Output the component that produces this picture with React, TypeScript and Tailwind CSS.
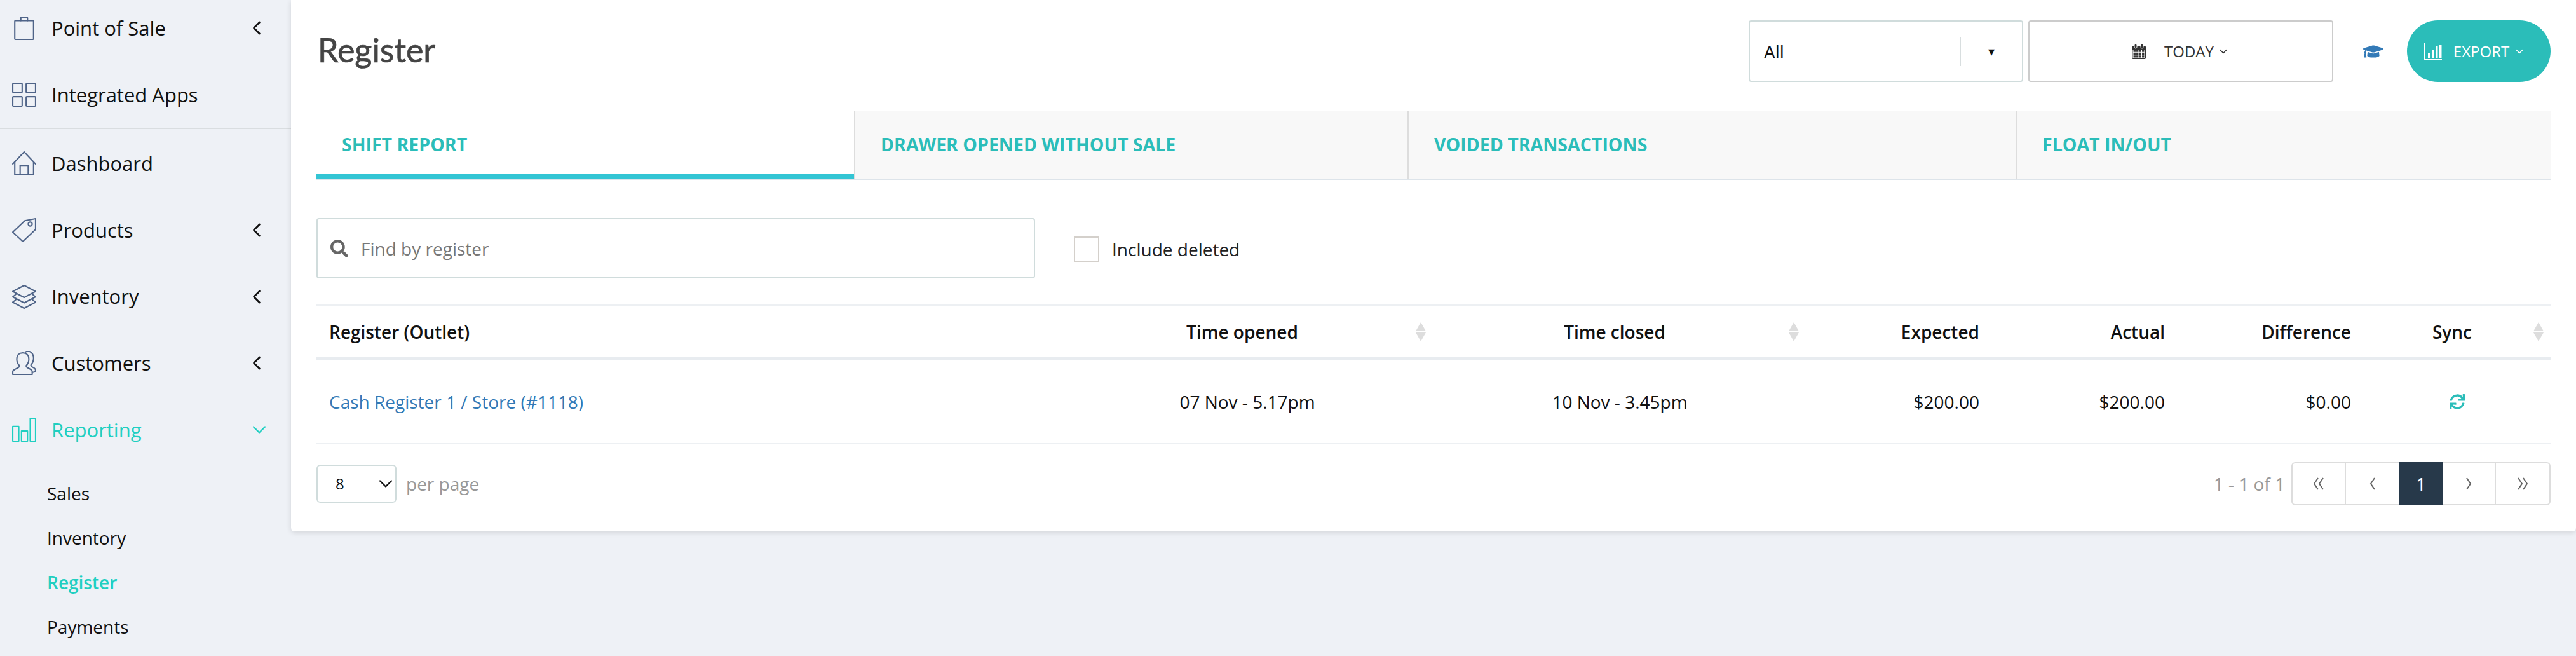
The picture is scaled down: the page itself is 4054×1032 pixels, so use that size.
import { ChevronDown, ChevronLeft } from "lucide-react";
import { FaGraduationCap, FaSearch, FaSync } from "react-icons/fa";
import type { ReactNode } from "react";

const iconProps = {
  width: 38,
  height: 38,
  viewBox: "0 0 36 36",
  fill: "none",
  stroke: "currentColor",
  strokeWidth: 2,
  strokeLinejoin: "round" as const,
  strokeLinecap: "round" as const,
};

// sidebar icons, drawn by hand to match the thin outline set
const BagIcon = () => (
  <svg {...iconProps}>
    <rect x="4" y="7" width="28" height="28" rx="1" />
    <path d="M13 7V3.5a1.5 1.5 0 0 1 1.5-1.5h7A1.5 1.5 0 0 1 23 3.5V7" />
  </svg>
);
const AppsIcon = () => (
  <svg {...iconProps}>
    <rect x="1" y="1" width="14" height="14" rx="1" />
    <rect x="21" y="1" width="14" height="14" rx="1" />
    <rect x="1" y="21" width="14" height="14" rx="1" />
    <rect x="21" y="21" width="14" height="14" rx="1" />
  </svg>
);
const HomeIcon = () => (
  <svg {...iconProps}>
    <path d="M1 19 18 1l17 18" />
    <path d="M4 16v19h28V16" />
    <path d="M12 35V21h12v14" />
  </svg>
);
const TagIcon = () => (
  <svg {...iconProps}>
    <path d="M1 21 19 4l16-3v16L16 35Z" />
    <circle cx="27" cy="9" r="3" />
  </svg>
);
const LayersIcon = () => (
  <svg {...iconProps}>
    <path d="M18 1 35 10 18 19 1 10Z" />
    <path d="M6 14 1 18l17 9 17-9-5-4" />
    <path d="M6 22 1 26l17 9 17-9-5-4" />
  </svg>
);
const UsersIcon = () => (
  <svg {...iconProps}>
    <path d="M1 35v-4c0-2 2-3 6-5 3-1 4-2 4-4-2-2-4-5-4-10C7 6 11 3 16 3s9 3 9 9c0 5-2 8-4 10 0 2 1 3 4 4 4 2 5 3 5 5v4Z" />
    <path d="M20 2c2-2 5-2 8 0s4 5 4 9-2 8-4 10c0 2 2 3 4 4s3 2 3 4c0 2-2 3-5 3" />
  </svg>
);
const BarsIcon = () => (
  <svg {...iconProps}>
    <rect x="1" y="13" width="9" height="22" />
    <rect x="14" y="20" width="9" height="15" />
    <rect x="27" y="1" width="8" height="34" />
  </svg>
);

const CalendarIcon = () => (
  <svg width="22" height="24" viewBox="0 0 22 24">
    <rect x="0" y="3" width="22" height="21" rx="2" fill="#333" />
    <rect x="4" y="0" width="4" height="7" rx="2" fill="#333" stroke="#fff" strokeWidth="1" />
    <rect x="14" y="0" width="4" height="7" rx="2" fill="#333" stroke="#fff" strokeWidth="1" />
    <path
      d="M2 9h18v13H2Z M2 13.3h18 M2 17.6h18 M6.5 9v13 M11 9v13 M15.5 9v13"
      fill="none"
      stroke="#fff"
      strokeWidth="1.1"
    />
    <path d="M1 8.5h20" stroke="#333" strokeWidth="1" />
  </svg>
);

const ChartIcon = () => (
  <svg width="28" height="28" viewBox="0 0 28 28" fill="currentColor">
    <path d="M1 1v26h27" fill="none" stroke="currentColor" strokeWidth="2" />
    <rect x="6" y="16" width="3.5" height="8" />
    <rect x="12" y="11" width="3.5" height="13" />
    <rect x="18" y="6" width="3.5" height="18" />
    <rect x="24" y="4" width="3.5" height="20" />
  </svg>
);

function NavItem({ icon, label, arrow, active }: { icon: ReactNode; label: string; arrow?: boolean; active?: boolean }) {
  return (
    <div className={`flex h-[104.6px] items-center pl-[19px] pr-[36px] ${active ? "text-[#1fcfc1]" : "text-[#111]"}`}>
      <span className={`flex w-[38px] shrink-0 ${active ? "text-[#1fcfc1]" : "text-[#4f6488]"}`}>{icon}</span>
      <span className="ml-[24px] flex-1 text-[31px]">{label}</span>
      {arrow && !active && <ChevronLeft size={36} strokeWidth={1.8} className="text-[#111]" />}
      {active && <ChevronDown size={36} strokeWidth={1.6} className="-mr-[4px]" />}
    </div>
  );
}

function SortIcon({ className }: { className: string }) {
  return (
    <span className={`absolute top-1/2 flex -translate-y-1/2 flex-col gap-[2px] ${className}`}>
      <span className="h-0 w-0 border-x-[8px] border-b-[14px] border-x-transparent border-b-[#dddddd]" />
      <span className="h-0 w-0 border-x-[8px] border-t-[14px] border-x-transparent border-t-[#dddddd]" />
    </span>
  );
}

function PagerArrow({ d, width }: { d: string; width: number }) {
  return (
    <svg width={width} height="20" viewBox={`0 0 ${width} 20`} fill="none" stroke="#666" strokeWidth="2">
      <path d={d} />
    </svg>
  );
}

const tabs = [
  { label: "SHIFT REPORT", width: "w-[846px]", active: true },
  { label: "DRAWER OPENED WITHOUT SALE", width: "w-[871px]" },
  { label: "VOIDED TRANSACTIONS", width: "w-[957px]" },
  { label: "FLOAT IN/OUT", width: "flex-1" },
];

export default function App() {
  return (
    <div className="flex h-[1032px] overflow-hidden bg-[#eef1f6] font-['Open_Sans',sans-serif]">
      {/* Sidebar */}
      <aside className="w-[458px] shrink-0 -mt-[8px]">
        <NavItem icon={<BagIcon />} label="Point of Sale" arrow />
        <NavItem icon={<AppsIcon />} label="Integrated Apps" />
        <div className="mb-[2px] h-[2px] bg-[#d9dde0]" />
        <NavItem icon={<HomeIcon />} label="Dashboard" />
        <NavItem icon={<TagIcon />} label="Products" arrow />
        <NavItem icon={<LayersIcon />} label="Inventory" arrow />
        <NavItem icon={<UsersIcon />} label="Customers" arrow />
        <NavItem icon={<BarsIcon />} label="Reporting" active />
        <ul className="pl-[74px] pt-[13px] text-[28px] text-[#111]">
          <li className="h-[70px] leading-[70px]">Sales</li>
          <li className="h-[70px] leading-[70px]">Inventory</li>
          <li className="h-[70px] leading-[70px] font-semibold text-[#1fcfc1]">Register</li>
          <li className="h-[70px] leading-[70px]">Payments</li>
        </ul>
      </aside>

      {/* Main card */}
      <main className="mr-[2px] h-[836px] flex-1 rounded-b-md bg-white px-[40px] shadow-[0_2px_8px_rgba(0,0,0,0.12)]">
        <div className="flex h-[174px] pt-[32px]">
          <h1 className="flex-1 pl-[2px] pt-[2px] font-['Lato',sans-serif] text-[52px] leading-[88px] text-[#444] [-webkit-text-stroke:0.7px_#444]">Register</h1>
          <div className="flex h-[97px] w-[432px] items-center rounded-[4px] border-2 border-[#d0dcdc] pl-[22px] text-[28px] text-[#111]">
            <span className="flex-1">All</span>
            <span className="h-[46px] w-[2px] bg-[#d8dedf]" />
            <span className="w-[96px] text-center text-[20px]">▾</span>
          </div>
          <div className="ml-[8px] flex h-[97px] w-[480px] items-center justify-center gap-[29px] rounded-[4px] border-2 border-[#cccccc] text-[24px] text-[#333]">
            <CalendarIcon />
            <span className="flex items-center gap-[5px]">
              TODAY <ChevronDown size={20} strokeWidth={1.8} />
            </span>
          </div>
          <div className="flex h-[97px] w-[116px] items-center justify-center pl-[10px] text-[#337ab7]">
            <FaGraduationCap size={32} />
          </div>
          <div className="flex h-[97px] w-[226px] items-center justify-center gap-[18px] rounded-full bg-[#2bbdb9] pr-[12px] text-[24px] text-white">
            <ChartIcon />
            <span className="flex items-center gap-[6px]">
              EXPORT <ChevronDown size={20} strokeWidth={1.8} />
            </span>
          </div>
        </div>

        {/* Tabs */}
        <div className="flex h-[109px] border-b-2 border-[#dde4ea] text-[28.5px] font-bold text-[#2bbdb9]">
          {tabs.map((tab) => (
            <div
              key={tab.label}
              className={`flex items-center pl-[40px] ${tab.width} ${
                tab.active ? "border-b-[8px] border-[#33c5d4] bg-white pt-[8px]" : "border-l-2 border-[#dddddd] bg-[#f8f8f8]"
              }`}
            >
              {tab.label}
            </div>
          ))}
        </div>

        {/* Filters */}
        <div className="flex h-[196px] items-start pt-[60px]">
          <div className="flex h-[95px] w-[1131px] items-center rounded-[4px] border-2 border-[#d0dcdc] pl-[20px]">
            <FaSearch size={28} className="text-[#666]" />
            <input placeholder="Find by register" className="ml-[20px] flex-1 text-[28px] outline-none placeholder:text-[#777]" />
          </div>
          <label className="ml-[61px] mt-[28px] flex items-center text-[28px] text-[#222]">
            <span className="h-[40px] w-[40px] border-2 border-[#d4d0cb] bg-white" />
            <span className="ml-[20px]">Include deleted</span>
          </label>
        </div>

        {/* Table */}
        <table className="w-[3516px] table-fixed border-t-2 border-[#edf0f3] text-[28px] text-[#111]">
          <colgroup>
            <col className="w-[1174px]" />
            <col className="w-[582px]" />
            <col className="w-[590px]" />
            <col className="w-[291px]" />
            <col className="w-[292px]" />
            <col className="w-[293px]" />
            <col className="w-[294px]" />
          </colgroup>
          <thead>
            <tr className="h-[84px] border-b-4 border-[#e8ecf0] font-semibold">
              <th className="px-[20px] text-left font-semibold">Register (Outlet)</th>
              <th className="relative pl-[20px] pr-[36px] text-center font-semibold">
                Time opened
                <SortIcon className="right-[10px]" />
              </th>
              <th className="relative pl-[20px] pr-[36px] text-center font-semibold">
                Time closed
                <SortIcon className="right-[13px]" />
              </th>
              <th className="px-[20px] text-right font-semibold">Expected</th>
              <th className="px-[20px] text-right font-semibold">Actual</th>
              <th className="px-[20px] text-right font-semibold">Difference</th>
              <th className="relative pl-[20px] pr-[36px] text-center font-semibold">
                Sync
                <SortIcon className="right-[11px]" />
              </th>
            </tr>
          </thead>
          <tbody>
            <tr className="h-[134px] border-b-2 border-[#edf0f3]">
              <td className="px-[20px] text-[#337ab7]">Cash Register 1 / Store (#1118)</td>
              <td className="px-[20px] text-center">07 Nov - 5.17pm</td>
              <td className="px-[20px] text-center">10 Nov - 3.45pm</td>
              <td className="px-[20px] text-right">$200.00</td>
              <td className="px-[20px] text-right">$200.00</td>
              <td className="px-[20px] text-right">$0.00</td>
              <td className="px-[20px]">
                <FaSync size={24} className="mx-auto text-[#2bbdb9]" />
              </td>
            </tr>
          </tbody>
        </table>

        {/* Footer */}
        <div className="flex items-start justify-between pt-[28px]">
          <div className="flex items-center pt-[4px]">
            <div className="flex h-[60px] w-[126px] items-center justify-between rounded-[6px] border-2 border-[#d0dcdc] pl-[28px] text-[24px] text-[#111]">
              8
              <ChevronDown size={36} strokeWidth={1.5} className="-mr-[3px]" />
            </div>
            <span className="ml-[15px] text-[28px] text-[#999]">per page</span>
          </div>
          <div className="flex items-center">
            <span className="mr-[10px] text-[28px] text-[#999]">1 - 1 of 1</span>
            <div className="flex h-[68px] w-[408px] items-stretch rounded-[6px] border-2 border-[#dddddd] text-[#777]">
              <span className="flex w-[84px] items-center justify-center border-r-2 border-[#dddddd]">
                <PagerArrow width={16} d="M7 1 1 10l6 9M15 1 9 10l6 9" />
              </span>
              <span className="flex w-[84px] items-center justify-center">
                <PagerArrow width={10} d="M8 1 2 10l6 9" />
              </span>
              <span className="-my-[2px] flex w-[68px] items-center justify-center bg-[#27394a] text-[28px] text-white">1</span>
              <span className="flex w-[84px] items-center justify-center border-r-2 border-[#dddddd]">
                <PagerArrow width={10} d="M2 1l6 9-6 9" />
              </span>
              <span className="flex flex-1 items-center justify-center">
                <PagerArrow width={16} d="M1 1l6 9-6 9M9 1l6 9-6 9" />
              </span>
            </div>
          </div>
        </div>
      </main>
    </div>
  );
}
